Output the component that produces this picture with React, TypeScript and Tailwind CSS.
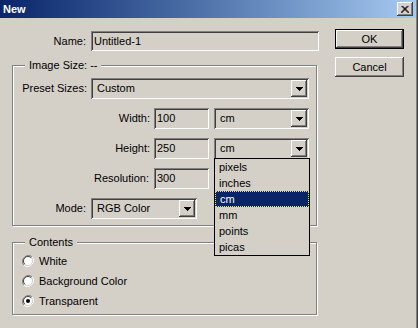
import { ReactNode } from "react";

const sunken =
  "shadow-[inset_1px_1px_0_#808080,inset_-1px_-1px_0_#ffffff,inset_2px_2px_0_#404040,inset_-2px_-2px_0_#d4d0c8]";
const raised =
  "shadow-[inset_-1px_-1px_0_#404040,inset_1px_1px_0_#ffffff,inset_-2px_-2px_0_#808080,inset_2px_2px_0_#d4d0c8]";

function TextField({ value, className }: { value: string; className: string }) {
  return (
    <div className={`${sunken} ${className} h-[20px] flex items-center pl-[3px] bg-[#d4d0c8]`}>
      {value}
    </div>
  );
}

function ArrowButton() {
  return (
    <div className={`${raised} w-[16px] h-[17px] flex items-center justify-center`}>
      <svg width="7" height="4" viewBox="0 0 7 4">
        <path d="M0 0h7v1h-1v1h-1v1h-1v1h-1v-1h-1v-1h-1v-1h-1z" fill="#000" />
      </svg>
    </div>
  );
}

function Select({ value, className }: { value: string; className: string }) {
  return (
    <div className={`${sunken} ${className} h-[21px] flex items-center justify-between pl-[6px] pr-[2px]`}>
      <span>{value}</span>
      <ArrowButton />
    </div>
  );
}

function GroupBox({ title, className, children }: { title: string; className: string; children: ReactNode }) {
  return (
    <div
      className={`relative ml-[12px] w-[305px] border border-[#808080] shadow-[1px_1px_0_#ffffff,inset_1px_1px_0_#ffffff] ${className}`}
    >
      <span className="absolute left-[12px] top-[-8px] bg-[#d4d0c8] px-[4px] leading-[14px]">{title}</span>
      {children}
    </div>
  );
}

function Radio({ label, checked }: { label: string; checked?: boolean }) {
  return (
    <div className="flex items-center h-[20px] pl-[9px]">
      <svg width="12" height="12" viewBox="0 0 12 12">
        <path d="M10.2 1.8A6 6 0 0 0 1.8 10.2" stroke="#808080" strokeWidth="1" fill="none" transform="translate(0 0)" />
        <path d="M1.8 10.2A6 6 0 0 0 10.2 1.8" stroke="#ffffff" strokeWidth="1" fill="none" />
        <circle cx="6" cy="6" r="4.5" fill="#ffffff" />
        <path d="M9.2 2.8A4.5 4.5 0 0 0 2.8 9.2" stroke="#404040" strokeWidth="1" fill="none" />
        <path d="M2.8 9.2A4.5 4.5 0 0 0 9.2 2.8" stroke="#d4d0c8" strokeWidth="1" fill="none" />
        {checked && <circle cx="6" cy="6" r="2" fill="#000" />}
      </svg>
      <span className="ml-[5px]">{label}</span>
    </div>
  );
}

function Button({ label, isDefault }: { label: string; isDefault?: boolean }) {
  return (
    <div className={`w-[69px] h-[20px] ${isDefault ? "border border-black" : ""}`}>
      <div className={`${raised} w-full h-full flex items-center justify-center`}>{label}</div>
    </div>
  );
}

const units = ["pixels", "inches", "cm", "mm", "points", "picas"];

export default function App() {
  return (
    <div className="relative flex w-[418px] h-[328px] overflow-hidden bg-[#d4d0c8] text-[11px] text-black font-['Liberation_Sans',Arial,sans-serif]">
      <div className="w-[416px] flex flex-col">
        {/* Title bar */}
        <div className="h-[18px] flex items-center justify-between bg-gradient-to-r from-[#0a246a] to-[#a6caf0] pl-[3px] pr-[3px]">
          <span className="text-white font-bold">New</span>
          <div className={`${raised} w-[16px] h-[14px] bg-[#d4d0c8] flex items-center justify-center`}>
            <svg width="8" height="7" viewBox="0 0 8 7">
              <path d="M0.5 0L7.5 7M1.5 0L8.5 7M7.5 0L0.5 7M6.5 0L-0.5 7" stroke="#000" strokeWidth="1" />
            </svg>
          </div>
        </div>

        <div className="flex">
          <div className="w-[335px]">
            {/* Name */}
            <div className="mt-[13px] flex items-center">
              <span className="w-[86px] text-right">Name:</span>
              <TextField value="Untitled-1" className="ml-[5px] w-[228px]" />
            </div>

            <GroupBox title="Image Size: --" className="mt-[14px] h-[161px] pt-[12px]">
              <div className="flex flex-col gap-[9px]">
                <div className="flex items-center">
                  <span className="w-[74px] text-right">Preset Sizes:</span>
                  <Select value="Custom" className="ml-[4px] w-[218px]" />
                </div>
                <div className="flex items-center">
                  <span className="w-[137px] text-right">Width:</span>
                  <TextField value="100" className="ml-[4px] w-[55px] h-[21px]" />
                  <Select value="cm" className="ml-[5px] w-[95px]" />
                </div>
                <div className="flex items-center">
                  <span className="w-[137px] text-right">Height:</span>
                  <TextField value="250" className="ml-[4px] w-[55px] h-[21px]" />
                  <Select value="cm" className="ml-[5px] w-[95px]" />
                </div>
                <div className="flex items-center">
                  <span className="w-[136px] text-right">Resolution:</span>
                  <TextField value="300" className="ml-[5px] w-[55px] h-[21px]" />
                </div>
                <div className="flex items-center">
                  <span className="w-[73px] text-right">Mode:</span>
                  <Select value="RGB Color" className="ml-[5px] w-[106px]" />
                </div>
              </div>
            </GroupBox>

            <GroupBox title="Contents" className="mt-[16px] h-[73px] pt-[8px]">
              <Radio label="White" />
              <Radio label="Background Color" />
              <Radio label="Transparent" checked />
            </GroupBox>
          </div>

          <div className="flex flex-col gap-[8px] mt-[11px]">
            <Button label="OK" isDefault />
            <Button label="Cancel" />
          </div>
        </div>
      </div>
      <div className="w-[1px] bg-[#808080]" />
      <div className="w-[1px] bg-[#404040]" />

      {/* Open unit list */}
      <div className="absolute left-[214px] top-[158px] w-[96px] border border-black bg-[#d4d0c8]">
        {units.map((u) => (
          <div
            key={u}
            className={`h-[16px] flex items-center pl-[4px] ${
              u === "cm" ? "bg-[#0a246a] text-white border border-dotted border-[#e8e27a] pl-[3px]" : ""
            }`}
          >
            {u}
          </div>
        ))}
      </div>
    </div>
  );
}
